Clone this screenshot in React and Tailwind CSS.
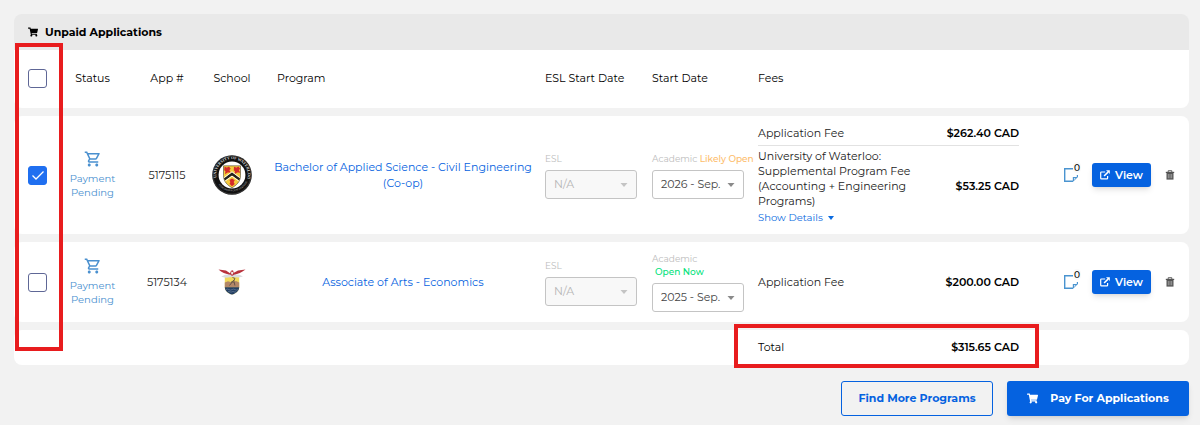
import React, { useState } from "react";
import { FaShoppingCart } from "react-icons/fa";
import { MdOutlineShoppingCart } from "react-icons/md";

const applications = [
  {
    id: "5175115",
    paid: true,
    crest: "waterloo",
    height: "h-[118px]",
    program: "Bachelor of Applied Science - Civil Engineering (Co-op)",
    intake: "2026 - Sep.",
    availability: "Likely Open",
    availabilityClass: "text-[#fdbd6c]",
    fees: [
      { name: "Application Fee", amount: "$262.40 CAD" },
      {
        name: "University of Waterloo: Supplemental Program Fee (Accounting + Engineering Programs)",
        amount: "$53.25 CAD",
        details: true,
      },
    ],
  },
  {
    id: "5175134",
    paid: false,
    crest: "eagle",
    height: "h-20",
    program: "Associate of Arts - Economics",
    intake: "2025 - Sep.",
    availability: "Open Now",
    availabilityClass: "block pl-[3px] text-[#00e27a]",
    fees: [{ name: "Application Fee", amount: "$200.00 CAD" }],
  },
];

function WaterlooCrest() {
  return (
    <svg viewBox="0 0 40 40" className="mx-auto size-10" role="img" aria-label="University of Waterloo">
      <defs>
        <path id="ring-top" d="M5 24.5A15.7 15.7 0 1 1 35 24.5" />
        <path id="ring-bottom" d="M4.4 26.5A17.3 17.3 0 0 0 35.6 26.5" />
      </defs>
      <circle cx="20" cy="20" r="19.8" fill="#111" />
      <circle cx="20" cy="20" r="19" fill="none" stroke="#777" strokeWidth="0.4" />
      <circle cx="20" cy="20" r="13.4" fill="#fff" />
      <text fill="#ddd" fontSize="4" fontWeight="700" fontFamily="Liberation Serif, serif">
        <textPath href="#ring-top" startOffset="2">UNIVERSITY OF WATERLOO</textPath>
      </text>
      <text fill="#bbb" fontSize="2.6" fontFamily="Liberation Serif, serif">
        <textPath href="#ring-bottom" startOffset="4">CONCORDIA CUM VERITATE</textPath>
      </text>
      <path d="M11.5 10.8H28.5V20.5C28.5 27 24 30.5 20 32.8C16 30.5 11.5 27 11.5 20.5Z" fill="#f5cb3d" stroke="#222" strokeWidth="0.5" />
      <path d="M13 12.5l2 .8 1.8-1 1.2 1.5-1.4 1.3 1.2 2-2.2-.4-1.8 1.3.2-2-1.2-1zM22.5 12.5l2 .8 1.8-1 1.2 1.5-1.4 1.3 1.2 2-2.2-.4-1.8 1.3.2-2-1.2-1zM18.2 25.2l1.8-1 2 1.2-1 1.6 1 1.8-2 1.6-1.8-1.8.8-1.3z" fill="#d52b2b" stroke="#d52b2b" strokeWidth="1.1" />
      <path d="M12 23.2L20 17.2L28 23.2L27 25.6L20 20.4L13 25.6Z" fill="#222" />
      <path d="M12.2 22.6L20 16.8L27.8 22.6" fill="none" stroke="#fff" strokeWidth="0.9" />
      <path d="M13.2 26L20 21.2L26.8 26" fill="none" stroke="#fff" strokeWidth="0.9" />
    </svg>
  );
}

function EagleCrest() {
  return (
    <svg viewBox="0 0 28 28" className="mx-auto size-7" role="img" aria-label="College crest">
      <path d="M6.8 8.5H21.2V19C21.2 23 18 25.3 14 26.6C10 25.3 6.8 23 6.8 19Z" fill="#f0d95c" />
      <path d="M6.8 14.5L10 13.2L14 14.5L18 13L21.2 14.5V19.5H6.8Z" fill="#b28767" />
      <path d="M6.8 19.2H21.2C20.9 23.1 17.8 25.4 14 26.6C10.2 25.4 7.1 23.1 6.8 19.2Z" fill="#233f63" />
      <path d="M8 21.6q1.5-1 3 0t3 0 3 0 3 0M10 23.8q1-.7 2 0t2 0 2 0 2 0" stroke="#8095ad" strokeWidth="0.5" fill="none" />
      <path d="M14.5 9.5l2.4.8-1 2.6 1 4.6M15.8 12L11.5 17.5M13 14h3" stroke="#5c4d45" strokeWidth="0.9" fill="none" />
      <path d="M.5 1.4L8 2.6L12 5.2L13 2.8L15 2.2L15.8 4.8L20 2.6L27.5 1.4L24.5 3.4L21.8 5L17.5 6.4L16.5 9L14 7.8L11 9L10.5 6.4L5.8 5L3 3.4Z" fill="#b8323c" />
      <path d="M3.2 8.8L7 6.8L12.2 6.6L14 8L16.5 6.4L21.5 6.8L25 8.6L20.5 9.5L14 9L8 9.7Z" fill="#d9dcdf" />
      <path d="M13.2 3.6L15.4 4.2L14.8 6.6L13.2 6.2Z" fill="#f2e9e6" />
    </svg>
  );
}

function ExternalLinkIcon() {
  return (
    <svg viewBox="0 0 10 10" className="size-[10px]" fill="none" stroke="currentColor" strokeWidth="1.2" aria-hidden="true">
      <path d="M5.2 2H1.4Q.7 2 .7 2.7V8.2Q.7 8.9 1.4 8.9H6.9Q7.6 8.9 7.6 8.2V6" />
      <path d="M4.1 6L8 2.1" strokeWidth="1.5" />
      <path d="M6 .3H9.8V4.1Z" fill="currentColor" stroke="none" />
    </svg>
  );
}

function TrashIcon() {
  return (
    <svg viewBox="0 0 10 10" className="h-[10px] w-[10px]" fill="none" stroke="currentColor" aria-hidden="true">
      <path d="M.8 2.4H9.2" strokeWidth="1.2" />
      <path d="M3.2 2V.7H6.8V2" strokeWidth="0.9" />
      <path d="M1.5 2.6H8.5V9.6H1.5Z" fill="currentColor" stroke="none" />
      <path d="M3.3 4V8.3M5 4V8.3M6.7 4V8.3" stroke="#fff" strokeOpacity="0.7" strokeWidth="0.6" />
    </svg>
  );
}

function NoteIcon() {
  return (
    <svg viewBox="0 0 16 16" className="size-4" fill="none" stroke="#4a94d0" aria-hidden="true">
      <path d="M10 1.7H1.7V14.3H10" strokeWidth="1.4" />
      <path d="M14.4 8V10" strokeWidth="1.2" />
      <path d="M9.8 15V10H15Z" fill="#4a94d0" stroke="none" />
      <path d="M11 11.3H12.6L11 12.9Z" fill="#fff" stroke="none" />
    </svg>
  );
}

function Checkbox({ label, defaultChecked = false }) {
  const [checked, setChecked] = useState(defaultChecked);
  return (
    <div className="relative ml-[14px] grid size-[19px] place-items-center">
      <input
        type="checkbox"
        aria-label={label}
        checked={checked}
        onChange={(e) => setChecked(e.target.checked)}
        className="size-[19px] appearance-none rounded-[3px] border border-[#5f6796] bg-white checked:border-[#1f6ff0] checked:bg-[#1f6ff0]"
      />
      {checked && (
        <svg viewBox="0 0 14 14" className="pointer-events-none absolute size-[14px]" fill="none" stroke="#fff" strokeWidth="1.3" aria-hidden="true">
          <path d="M1.5 7.5L5 11L12.5 3.5" />
        </svg>
      )}
    </div>
  );
}

function Dropdown({ id, value, disabled }) {
  return (
    <div className="relative mt-[5px] w-[92px]">
      <select
        id={id}
        disabled={disabled}
        defaultValue={value}
        className="block h-[29px] w-full appearance-none rounded-[3px] border border-[#c4c4c4] bg-white pl-2 text-[11px] text-[#444] opacity-100 disabled:bg-[#f8f8f8] disabled:text-[#b5b5b5]"
      >
        <option>{value}</option>
      </select>
      <svg
        viewBox="0 0 8 4"
        className={`pointer-events-none absolute top-[13px] right-[9px] h-1 w-2 ${disabled ? "text-[#c4c4c4]" : "text-[#8a8a8a]"}`}
        fill="currentColor"
        aria-hidden="true"
      >
        <path d="M.5 0H7.5L4 4Z" />
      </svg>
    </div>
  );
}

function ApplicationRow({ app }) {
  return (
    <tr className={`[&>td]:bg-white ${app.height}`}>
      <td className="rounded-l-lg"><Checkbox label={`Select application ${app.id}`} defaultChecked={app.paid} /></td>
      <td className="text-center text-[10px] leading-[14px] text-[#4a90cf]">
        <MdOutlineShoppingCart className="mx-auto mb-1 size-[18px]" aria-hidden="true" />
        Payment Pending
      </td>
      <td className="text-center text-[#222]">{app.id}</td>
      <td>{app.crest === "waterloo" ? <WaterlooCrest /> : <EagleCrest />}</td>
      <td className="pr-1 pl-5 text-center leading-4">
        <a href="#program" className="text-[#0562e0]">{app.program}</a>
      </td>
      <td className="pl-2 text-[9px] leading-[13px] text-[#bdbdbd]">
        <label htmlFor={`esl-${app.id}`}>ESL</label>
        <Dropdown id={`esl-${app.id}`} value="N/A" disabled />
      </td>
      <td className="pl-2 text-[9px] leading-[13px] whitespace-nowrap text-[#bdbdbd]">
        <label htmlFor={`start-${app.id}`}>Academic</label>{" "}
        <span className={`font-medium ${app.availabilityClass}`}>{app.availability}</span>
        <Dropdown id={`start-${app.id}`} value={app.intake} />
      </td>
      <td className="py-2 pr-px pl-2">
        <div className="divide-y divide-[#e2e2e2]">
          {app.fees.map((fee) => (
            <div key={fee.name} className="flex items-center justify-between pb-1 last:pb-0 [&+&]:pt-[3px]">
              <div className="w-[154px] text-[#222]">
                {fee.name}
                {fee.details && (
                  <button type="button" className="mt-[2px] flex items-center gap-[5px] text-[10px] leading-[14px] text-[#0a6be0]">
                    Show Details
                    <svg viewBox="0 0 6 4" className="h-1 w-[6px]" fill="currentColor" aria-hidden="true"><path d="M0 0H6L3 4Z" /></svg>
                  </button>
                )}
              </div>
              <strong className="font-semibold">{fee.amount}</strong>
            </div>
          ))}
        </div>
      </td>
      <td>
        <button type="button" aria-label="Notes" className="relative ml-[43px] block">
          <NoteIcon />
          <span className="absolute -top-[5px] left-[10px] rounded-sm bg-[#fafafa] px-px text-[9px] leading-[11px] font-medium">0</span>
        </button>
      </td>
      <td>
        <button type="button" className="mx-auto flex h-6 w-[59px] items-center justify-center gap-[5px] rounded-[3px] bg-[#0562e0] text-[11px] font-semibold text-white shadow-md shadow-black/10">
          <ExternalLinkIcon />
          View
        </button>
      </td>
      <td className="rounded-r-lg">
        <button type="button" aria-label="Delete application" className="ml-[9px] block text-[#555]">
          <TrashIcon />
        </button>
      </td>
    </tr>
  );
}

export default function App() {
  return (
    <main className="min-h-screen bg-[#f2f2f2] pt-[14px] pr-[11px] pb-2 pl-[14px] font-['Montserrat','Inter',sans-serif] text-[11px] leading-[15px] text-black">
      <section className="relative">
        <h2 className="-mb-2 flex h-9 items-center gap-[7px] rounded-t-lg bg-[#e9e9e9] pl-[14px] font-bold">
          <FaShoppingCart className="size-[10px]" aria-hidden="true" />
          Unpaid Applications
        </h2>
        <table className="w-full table-fixed border-separate border-spacing-x-0 border-spacing-y-2">
          <colgroup>
            <col className="w-[48px]" />
            <col className="w-[61px]" />
            <col className="w-[88px]" />
            <col className="w-[42px]" />
            <col />
            <col className="w-[107px]" />
            <col className="w-[106px]" />
            <col className="w-[270px]" />
            <col className="w-[67px]" />
            <col className="w-[69px]" />
            <col className="w-[33px]" />
          </colgroup>
          <thead>
            <tr className="h-[58px] text-left [&>th]:bg-white [&>th]:pb-[2px] [&>th]:font-normal">
              <th className="rounded-bl-lg"><Checkbox label="Select all applications" /></th>
              <th className="text-center">Status</th>
              <th className="text-center">App #</th>
              <th className="text-center">School</th>
              <th className="pl-6">Program</th>
              <th className="pl-2">ESL Start Date</th>
              <th className="pl-2">Start Date</th>
              <th className="pl-2">Fees</th>
              <th colSpan={3} aria-label="Actions" className="rounded-br-lg" />
            </tr>
          </thead>
          <tbody>
            <ApplicationRow app={applications[0]} />
            <ApplicationRow app={applications[1]} />
          </tbody>
          <tfoot>
            <tr className="h-[35px] [&>td]:bg-white">
              <td colSpan={7} className="rounded-l-lg" />
              <td className="relative pr-px pl-2">
                <div className="flex justify-between">
                  <span>Total</span>
                  <strong className="font-semibold">$315.65 CAD</strong>
                </div>
                <span className="pointer-events-none absolute -top-[6px] -right-[19px] -bottom-[3px] -left-4 border-4 border-[#e81c1e]" />
              </td>
              <td colSpan={3} className="rounded-r-lg" />
            </tr>
          </tfoot>
        </table>
        <span className="pointer-events-none absolute top-[29px] bottom-[22px] left-px w-12 border-4 border-[#e81c1e]" />
      </section>
      <div className="mt-2 flex justify-end gap-[14px] text-[11px] font-bold">
        <button type="button" className="h-[35px] w-[152px] rounded-[3px] border border-[#0562e0] text-[#0562e0]">Find More Programs</button>
        <button type="button" className="flex h-[35px] w-[182px] items-center justify-center gap-3 rounded-[3px] bg-[#0562e0] text-white shadow-md shadow-black/10">
          <FaShoppingCart className="size-[11px]" aria-hidden="true" />
          Pay For Applications
        </button>
      </div>
    </main>
  );
}
